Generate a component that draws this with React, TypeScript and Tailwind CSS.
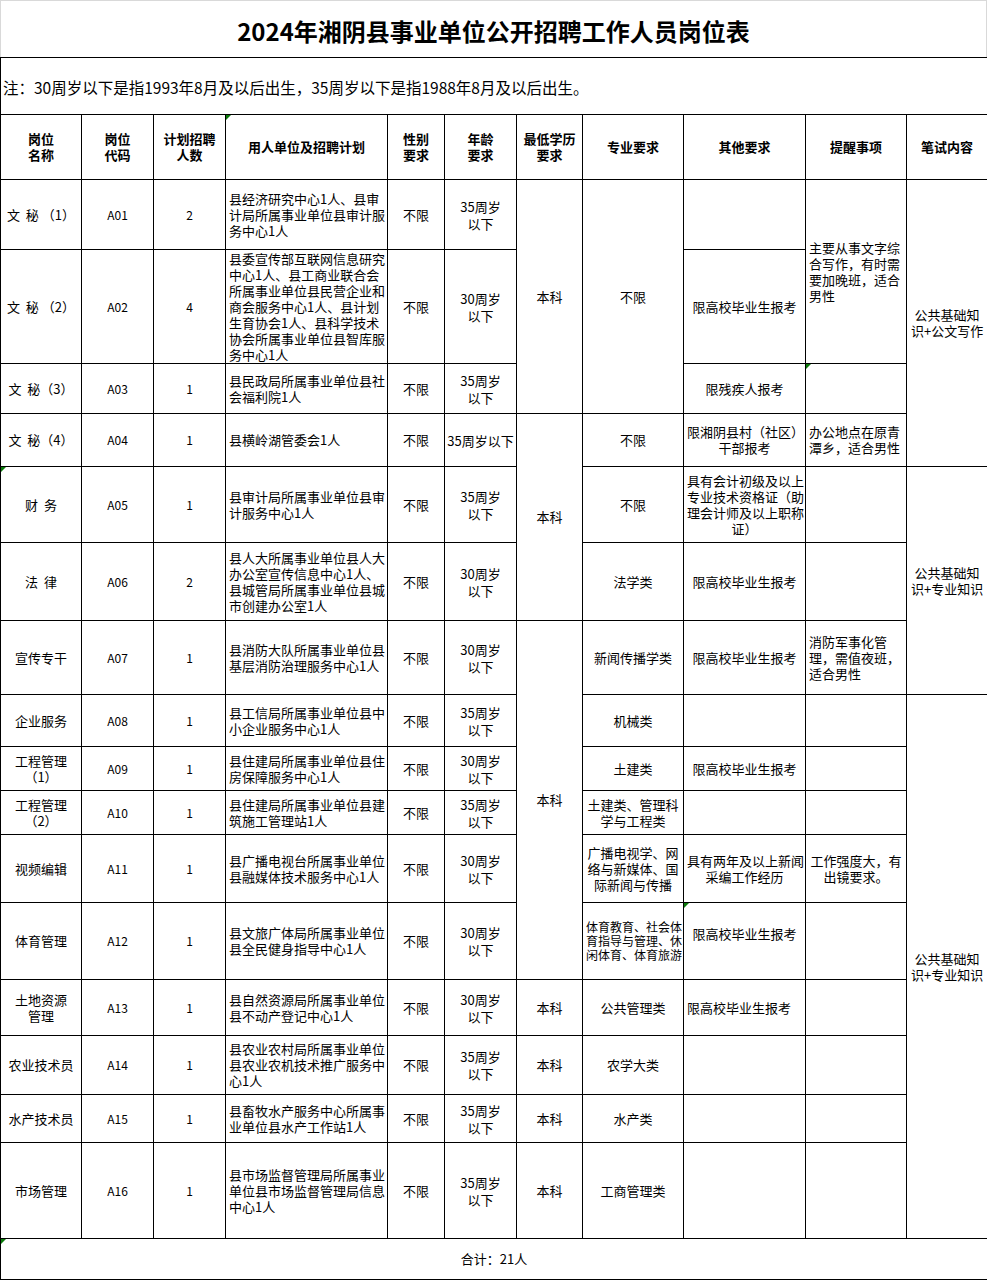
import React from "react";
import clsx from "clsx";

type Cell = {
  t: string[];
  span?: number;
  left?: boolean;
  tri?: boolean;
  small?: boolean;
  lift?: boolean;
} | null;

type Row = {
  h: string;
  name: string[];
  nameTri?: boolean;
  code: string;
  num: string;
  unit: string[];
  age: string[];
  edu: Cell;
  major: Cell;
  other: Cell;
  remind: Cell;
  exam: Cell;
};

const c = (t: string | string[], o: Omit<NonNullable<Cell>, "t"> = {}): Cell => ({
  t: Array.isArray(t) ? t : [t],
  ...o,
});
const empty = (o: Omit<NonNullable<Cell>, "t"> = {}): Cell => ({ t: [], ...o });

const AGE35 = ["35周岁", "以下"];
const AGE30 = ["30周岁", "以下"];
const GRAD = "限高校毕业生报考";
const ZHUANYE = ["公共基础知", "识+专业知识"];

const rows: Row[] = [
  {
    h: "h-[70px]",
    name: ["文\u00a0\u00a0秘\u00a0（1）"],
    code: "A01",
    num: "2",
    unit: ["县经济研究中心1人、县审", "计局所属事业单位县审计服", "务中心1人"],
    age: AGE35,
    edu: c("本科", { span: 3 }),
    major: c("不限", { span: 3 }),
    other: empty(),
    remind: c(["主要从事文字综", "合写作，有时需", "要加晚班，适合", "男性"], { span: 2, left: true }),
    exam: c(["公共基础知", "识+公文写作"], { span: 4 }),
  },
  {
    h: "h-[114px]",
    name: ["文\u00a0\u00a0秘\u00a0（2）"],
    code: "A02",
    num: "4",
    unit: [
      "县委宣传部互联网信息研究",
      "中心1人、县工商业联合会",
      "所属事业单位县民营企业和",
      "商会服务中心1人、县计划",
      "生育协会1人、县科学技术",
      "协会所属事业单位县智库服",
      "务中心1人",
    ],
    age: AGE30,
    edu: null,
    major: null,
    other: c(GRAD),
    remind: null,
    exam: null,
  },
  {
    h: "h-[50px]",
    name: ["文\u00a0\u00a0秘（3）"],
    code: "A03",
    num: "1",
    unit: ["县民政局所属事业单位县社", "会福利院1人"],
    age: AGE35,
    edu: null,
    major: null,
    other: c("限残疾人报考"),
    remind: empty({ tri: true }),
    exam: null,
  },
  {
    h: "h-[53px]",
    name: ["文\u00a0\u00a0秘（4）"],
    code: "A04",
    num: "1",
    unit: ["县横岭湖管委会1人"],
    age: ["35周岁以下"],
    edu: c("本科", { span: 3 }),
    major: c("不限"),
    other: c(["限湘阴县村（社区）", "干部报考"]),
    remind: c(["办公地点在原青", "潭乡，适合男性"], { left: true }),
    exam: null,
  },
  {
    h: "h-[76px]",
    name: ["财\u00a0\u00a0务"],
    nameTri: true,
    code: "A05",
    num: "1",
    unit: ["县审计局所属事业单位县审", "计服务中心1人"],
    age: AGE35,
    edu: null,
    major: c("不限"),
    other: c(["具有会计初级及以上", "专业技术资格证（助", "理会计师及以上职称", "证）"]),
    remind: empty(),
    exam: c(ZHUANYE, { span: 3 }),
  },
  {
    h: "h-[78px]",
    name: ["法\u00a0\u00a0律"],
    code: "A06",
    num: "2",
    unit: ["县人大所属事业单位县人大", "办公室宣传信息中心1人、", "县城管局所属事业单位县城", "市创建办公室1人"],
    age: AGE30,
    edu: null,
    major: c("法学类"),
    other: c(GRAD),
    remind: empty(),
    exam: null,
  },
  {
    h: "h-[74px]",
    name: ["宣传专干"],
    code: "A07",
    num: "1",
    unit: ["县消防大队所属事业单位县", "基层消防治理服务中心1人"],
    age: AGE30,
    edu: c("本科", { span: 6 }),
    major: c("新闻传播学类"),
    other: c(GRAD),
    remind: c(["消防军事化管", "理，需值夜班，", "适合男性"], { left: true }),
    exam: null,
  },
  {
    h: "h-[52px]",
    name: ["企业服务"],
    code: "A08",
    num: "1",
    unit: ["县工信局所属事业单位县中", "小企业服务中心1人"],
    age: AGE35,
    edu: null,
    major: c("机械类"),
    other: empty(),
    remind: empty(),
    exam: c(ZHUANYE, { span: 9 }),
  },
  {
    h: "h-[44px]",
    name: ["工程管理", "（1）"],
    code: "A09",
    num: "1",
    unit: ["县住建局所属事业单位县住", "房保障服务中心1人"],
    age: AGE30,
    edu: null,
    major: c("土建类"),
    other: c(GRAD),
    remind: empty(),
    exam: null,
  },
  {
    h: "h-[44px]",
    name: ["工程管理", "（2）"],
    code: "A10",
    num: "1",
    unit: ["县住建局所属事业单位县建", "筑施工管理站1人"],
    age: AGE35,
    edu: null,
    major: c(["土建类、管理科", "学与工程类"]),
    other: empty(),
    remind: empty(),
    exam: null,
  },
  {
    h: "h-[68px]",
    name: ["视频编辑"],
    code: "A11",
    num: "1",
    unit: ["县广播电视台所属事业单位", "县融媒体技术服务中心1人"],
    age: AGE30,
    edu: null,
    major: c(["广播电视学、网", "络与新媒体、国", "际新闻与传播"]),
    other: c(["具有两年及以上新闻", "采编工作经历"]),
    remind: c(["工作强度大，有", "出镜要求。"]),
    exam: null,
  },
  {
    h: "h-[77px]",
    name: ["体育管理"],
    code: "A12",
    num: "1",
    unit: ["县文旅广体局所属事业单位", "县全民健身指导中心1人"],
    age: AGE30,
    edu: null,
    major: c(["体育教育、社会体", "育指导与管理、休", "闲体育、体育旅游"], { small: true }),
    other: c(GRAD, { tri: true, lift: true }),
    remind: empty(),
    exam: null,
  },
  {
    h: "h-[56px]",
    name: ["土地资源", "管理"],
    code: "A13",
    num: "1",
    unit: ["县自然资源局所属事业单位", "县不动产登记中心1人"],
    age: AGE30,
    edu: c("本科"),
    major: c("公共管理类"),
    other: c(GRAD, { left: true }),
    remind: empty(),
    exam: null,
  },
  {
    h: "h-[59px]",
    name: ["农业技术员"],
    code: "A14",
    num: "1",
    unit: ["县农业农村局所属事业单位", "县农业农机技术推广服务中", "心1人"],
    age: AGE35,
    edu: c("本科"),
    major: c("农学大类"),
    other: empty(),
    remind: empty(),
    exam: null,
  },
  {
    h: "h-[48px]",
    name: ["水产技术员"],
    code: "A15",
    num: "1",
    unit: ["县畜牧水产服务中心所属事", "业单位县水产工作站1人"],
    age: AGE35,
    edu: c("本科"),
    major: c("水产类"),
    other: empty(),
    remind: empty(),
    exam: null,
  },
  {
    h: "h-[96px]",
    name: ["市场管理"],
    code: "A16",
    num: "1",
    unit: ["县市场监督管理局所属事业", "单位县市场监督管理局信息", "中心1人"],
    age: AGE35,
    edu: c("本科"),
    major: c("工商管理类"),
    other: empty(),
    remind: empty(),
    exam: null,
  },
];

const headers = [
  ["岗位", "名称"],
  ["岗位", "代码"],
  ["计划招聘", "人数"],
  ["用人单位及招聘计划"],
  ["性别", "要求"],
  ["年龄", "要求"],
  ["最低学历", "要求"],
  ["专业要求"],
  ["其他要求"],
  ["提醒事项"],
  ["笔试内容"],
];

const widths = [
  "w-[81px]",
  "w-[72px]",
  "w-[72px]",
  "w-[162px]",
  "w-[57px]",
  "w-[72px]",
  "w-[66px]",
  "w-[101px]",
  "w-[122px]",
  "w-[101px]",
  "w-[81px]",
];

// little green corner mark, like Excel's error flag
function Tri() {
  return (
    <span className="absolute left-0 top-0 h-0 w-0 border-r-[5px] border-t-[5px] border-r-transparent border-t-[#0a7a0a]" />
  );
}

function Lines({ t }: { t: string[] }) {
  return (
    <>
      {t.map((l, i) => (
        <div key={i} className="whitespace-nowrap">
          {l}
        </div>
      ))}
    </>
  );
}

function Td({ cell }: { cell: Cell }) {
  if (!cell) return null;
  return (
    <td
      rowSpan={cell.span}
      className={clsx(
        "relative border border-black px-[3px] align-middle",
        cell.left ? "text-left" : "text-center",
        cell.small ? "text-[12px] leading-[14px]" : "text-[13px] leading-[16px]",
        cell.lift && "pb-[14px]"
      )}
    >
      {cell.tri && <Tri />}
      <Lines t={cell.t} />
    </td>
  );
}

export default function App() {
  return (
    <div className="w-[987px] bg-white text-black font-['Noto_Sans_CJK_SC','Liberation_Sans',sans-serif]">
      <div className="flex h-[57px] items-center justify-center border-x border-t border-[#d9d9d9] pt-[4px] text-[24px] font-bold">
        2024年湘阴县事业单位公开招聘工作人员岗位表
      </div>

      <table className="w-[987px] table-fixed border-collapse">
        <colgroup>
          {widths.map((w, i) => (
            <col key={i} className={w} />
          ))}
        </colgroup>
        <tbody>
          <tr className="h-[57px]">
            <td colSpan={11} className="border border-black px-[2px] pt-[3px] text-left align-middle text-[15.5px]">
              注：30周岁以下是指1993年8月及以后出生，35周岁以下是指1988年8月及以后出生。
            </td>
          </tr>

          <tr className="h-[65px]">
            {headers.map((h, i) => (
              <td
                key={i}
                className="relative border border-black px-[2px] text-center align-middle text-[13px] font-bold leading-[16px]"
              >
                {i === 3 && <Tri />}
                <Lines t={h} />
              </td>
            ))}
          </tr>

          {rows.map((r) => (
            <tr key={r.code} className={r.h}>
              <td className="relative border border-black px-[2px] text-center align-middle text-[13px] leading-[16px]">
                {r.nameTri && <Tri />}
                <Lines t={r.name} />
              </td>
              <td className="border border-black text-center align-middle text-[12px]">{r.code}</td>
              <td className="border border-black text-center align-middle text-[12px]">{r.num}</td>
              <td className="border border-black px-[3px] text-left align-middle text-[13px] leading-[16px]">
                <Lines t={r.unit} />
              </td>
              <td className="border border-black text-center align-middle text-[13px]">不限</td>
              <td className="border border-black px-[2px] text-center align-middle text-[13px] leading-[17px]">
                <Lines t={r.age} />
              </td>
              <Td cell={r.edu} />
              <Td cell={r.major} />
              <Td cell={r.other} />
              <Td cell={r.remind} />
              <Td cell={r.exam} />
            </tr>
          ))}

          <tr className="h-[41px]">
            <td colSpan={11} className="relative border border-black text-center align-middle text-[13px]">
              <Tri />
              合计：21人
            </td>
          </tr>
        </tbody>
      </table>
    </div>
  );
}
